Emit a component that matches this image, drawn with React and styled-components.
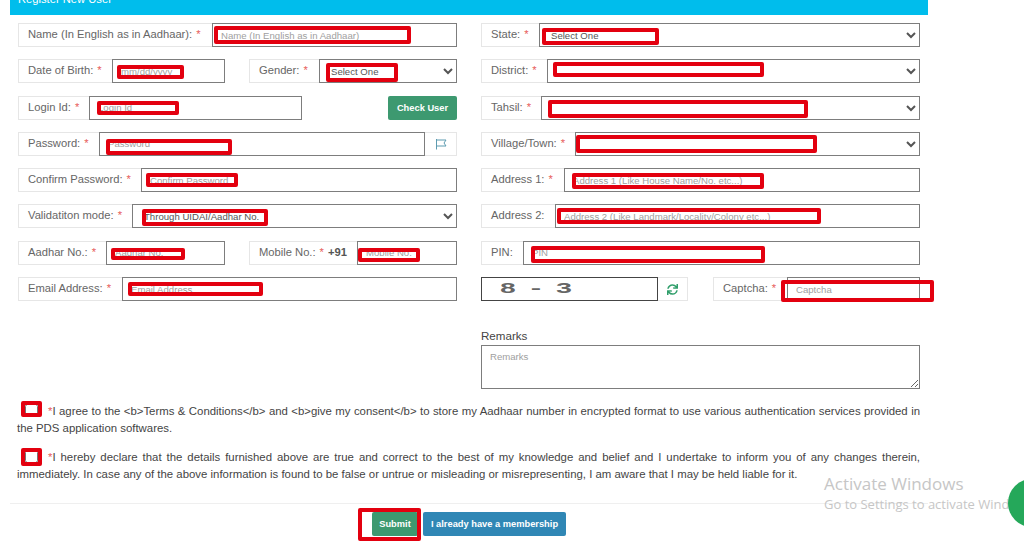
import React from 'react';
import styled, { createGlobalStyle } from 'styled-components';
import { FaSync } from 'react-icons/fa';

const GlobalStyle = createGlobalStyle`
	html, body {
		margin: 0;
		background: #fff;
	}
	body {
		font-family: 'Liberation Sans', Arial, sans-serif;
		font-size: 11.2px;
		color: #555;
	}
`;

const Page = styled.div`
	position: relative;
	width: 1024px;
	height: 543px;
	overflow: hidden;
`;

const Banner = styled.div`
	box-sizing: border-box;
	width: 918px;
	height: 15px;
	margin-left: 10px;
	padding-left: 8px;
	background: #00bdec;
	color: #fff;
	overflow: hidden;
`;

// the title is scrolled off the top of the window, only its lower part shows
const BannerTitle = styled.div`
	margin-top: -1px;
	font-size: 11.2px;
	line-height: 0;
`;

const FormGrid = styled.div`
	display: grid;
	grid-template-columns: 439px 439px;
	column-gap: 24px;
	padding: 8px 0 0 18px;
`;

const Column = styled.div`
	display: flex;
	flex-direction: column;
	gap: 12.3px;
`;

const Row = styled.div`
	display: flex;
	height: 24px;
	justify-content: space-between;
`;

const Group = styled.div`
	display: flex;
	height: 24px;
	width: ${props => (props.$width ? `${props.$width}px` : '100%')};
`;

const Addon = styled.label`
	box-sizing: border-box;
	display: flex;
	align-items: center;
	flex: none;
	width: ${props => props.$width}px;
	padding: 0 0 2px 9px;
	border: 1px solid #e6e6e6;
	border-right: none;
	white-space: nowrap;
	color: #666;
`;

const Star = styled.span`
	color: #e8605c;
	margin-left: 4px;
`;

const ClauseStar = styled.span`
	color: #e8605c;
`;

const Prefix = styled.b`
	color: #555;
	margin-left: 4px;
`;

const TextInput = styled.input`
	box-sizing: border-box;
	flex: 1;
	min-width: 0;
	height: 24px;
	padding: 0 8px;
	border: 1px solid #7d7d7d;
	border-radius: 0;
	outline: none;
	background: #fff;
	font-family: inherit;
	font-size: 9.6px;
	color: #555;
	&::placeholder {
		color: #a0a0a0;
		opacity: 1;
	}
`;

const Select = styled.select`
	box-sizing: border-box;
	flex: 1;
	min-width: 0;
	height: 24px;
	padding: 0 7px;
	border: 1px solid #7d7d7d;
	border-radius: 0;
	outline: none;
	background: #fff;
	font-family: inherit;
	font-size: 9.6px;
	color: #555;
`;

const FlagAddon = styled.span`
	box-sizing: border-box;
	display: flex;
	align-items: center;
	justify-content: center;
	flex: none;
	width: 32px;
	border: 1px solid #e6e6e6;
	border-left: none;
	color: #5d9bb0;
`;

const Button = styled.button`
	height: 24px;
	padding: 0;
	width: ${props => props.$width}px;
	border: none;
	border-radius: 2px;
	background: ${props => (props.$blue ? '#3087b5' : '#3d9970')};
	color: #fff;
	font-family: inherit;
	font-size: 9.3px;
	font-weight: bold;
`;

const CaptchaBox = styled.div`
	box-sizing: border-box;
	display: flex;
	align-items: center;
	justify-content: center;
	width: 177px;
	padding-right: 70px;
	border: 1px solid #444;
	font-family: 'Liberation Mono', monospace;
	font-weight: bold;
	font-size: 14px;
	color: #666;
	white-space: pre;
	letter-spacing: -1.4px;
`;

const CaptchaText = styled.span`
	display: inline-block;
	transform: scaleX(2);
`;

const RefreshAddon = styled.span`
	box-sizing: border-box;
	display: flex;
	align-items: center;
	justify-content: center;
	width: 30px;
	border: 1px solid #e6e6e6;
	border-left: none;
	color: #2f9e6a;
	font-size: 11px;
`;

const CaptchaLeft = styled.div`
	display: flex;
`;

const RemarksLabel = styled.div`
	margin-top: 28px;
	margin-bottom: 2px;
	color: #444;
	font-size: 11.6px;
	line-height: 14px;
`;

const RemarksArea = styled.textarea`
	box-sizing: border-box;
	display: block;
	width: 439px;
	height: 44px;
	padding: 5px 8px;
	border: 1px solid #7d7d7d;
	border-radius: 0;
	outline: none;
	font-family: inherit;
	font-size: 9.6px;
	&::placeholder {
		color: #a0a0a0;
		opacity: 1;
	}
`;

const Terms = styled.div`
	width: 903px;
	margin: 14px 0 0 17px;
	display: flex;
	flex-direction: column;
	gap: 13px;
`;

const Clause = styled.p`
	margin: 0;
	font-size: 11.4px;
	line-height: 16.5px;
	color: #444;
	text-align: justify;
`;

const Check = styled.input`
	width: 13px;
	height: 13px;
	margin: 0 10px 0 8px;
	vertical-align: -2px;
`;

const Divider = styled.hr`
	width: 918px;
	height: 1px;
	margin: 21px 0 0 10px;
	border: none;
	background: #efefef;
`;

const Actions = styled.div`
	display: flex;
	gap: 5px;
	padding: 8px 0 0 372px;
`;

// red marker boxes drawn on top of the form
const Mark = styled.div`
	position: absolute;
	box-sizing: border-box;
	left: ${props => props.$x}px;
	top: ${props => props.$y}px;
	width: ${props => props.$w}px;
	height: ${props => props.$h}px;
	border: 4px solid #e3000f;
	border-radius: 2px;
`;

const Watermark = styled.div`
	position: absolute;
	left: 824px;
	top: 473px;
	font-family: 'Open Sans', sans-serif;
	color: #c6c6c6;
	white-space: nowrap;
`;

const WatermarkTitle = styled.div`
	font-size: 17px;
	line-height: 22px;
`;

const WatermarkSub = styled.div`
	font-size: 13px;
	line-height: 18px;
`;

const ChatBubble = styled.div`
	position: absolute;
	left: 1008px;
	top: 479px;
	width: 48px;
	height: 48px;
	border-radius: 50%;
	background: #25a85a;
`;

const marks = [
	[214, 26, 197, 18],
	[117, 65, 67, 14],
	[326, 63, 72, 19],
	[97, 101, 82, 14],
	[106, 139, 126, 16],
	[146, 173, 92, 14],
	[142, 209, 126, 17],
	[111, 248, 74, 12],
	[358, 248, 62, 14],
	[128, 282, 135, 14],
	[542, 28, 117, 17],
	[553, 62, 211, 15],
	[548, 100, 260, 18],
	[576, 135, 241, 18],
	[572, 173, 192, 16],
	[557, 208, 264, 16],
	[531, 246, 234, 17],
	[781, 280, 153, 22],
	[21, 401, 21, 16],
	[21, 448, 21, 18],
	[358, 508, 63, 33],
];

const FlagIcon = () => (
	<svg width='12' height='12' viewBox='0 0 12 12' fill='none' stroke='currentColor' strokeWidth='1'>
		<path d='M1.5 1v10.5M1.5 2h9.5l-2 3 2 3H1.5' />
	</svg>
);

const Field = ({ label, width, required = true, prefix, groupWidth, placeholder, options, type = 'text' }) => (
	<Group $width={groupWidth}>
		<Addon $width={width}>
			{label}
			{required && <Star>*</Star>}
			{prefix && <Prefix>{prefix}</Prefix>}
		</Addon>
		{options ? (
			<Select defaultValue={options}>
				<option>{options}</option>
			</Select>
		) : (
			<TextInput type={type} placeholder={placeholder} />
		)}
	</Group>
);

const App = () => (
	<Page>
		<GlobalStyle />
		<Banner>
			<BannerTitle>Register New User</BannerTitle>
		</Banner>
		<FormGrid>
			<Column>
				<Field label='Name (In English as in Aadhaar):' width={194} placeholder='Name (In English as in Aadhaar)' />
				<Row>
					<Field label='Date of Birth:' width={94} groupWidth={207} placeholder='mm/dd/yyyy' />
					<Field label='Gender:' width={70} groupWidth={208} options='Select One' />
				</Row>
				<Row>
					<Field label='Login Id:' width={71} groupWidth={284} placeholder='Login Id' />
					<Button $width={69}>Check User</Button>
				</Row>
				<Group>
					<Addon $width={81}>
						Password:<Star>*</Star>
					</Addon>
					<TextInput type='password' placeholder='Password' />
					<FlagAddon>
						<FlagIcon />
					</FlagAddon>
				</Group>
				<Field label='Confirm Password:' width={123} type='password' placeholder='Confirm Password' />
				<Field label='Validatiton mode:' width={114} options='Through UIDAI/Aadhar No.' />
				<Row>
					<Field label='Aadhar No.:' width={88} groupWidth={207} placeholder='Aadhar No.' />
					<Field label='Mobile No.:' prefix='+91' width={108} groupWidth={208} placeholder='Mobile No.' />
				</Row>
				<Field label='Email Address:' width={104} placeholder='Email Address' />
			</Column>
			<Column>
				<Field label='State:' width={58} options='Select One' />
				<Field label='District:' width={66} options=' ' />
				<Field label='Tahsil:' width={60} options=' ' />
				<Field label='Village/Town:' width={94} options=' ' />
				<Field label='Address 1:' width={83} placeholder='Address 1 (Like House Name/No. etc...)' />
				<Field label='Address 2:' required={false} width={74} placeholder='Address 2 (Like Landmark/Locality/Colony etc...)' />
				<Field label='PIN:' required={false} width={42} placeholder='PIN' />
				<div>
					<Row>
						<CaptchaLeft>
							<CaptchaBox>
								<CaptchaText>8 - 3</CaptchaText>
							</CaptchaBox>
							<RefreshAddon>
								<FaSync />
							</RefreshAddon>
						</CaptchaLeft>
						<Field label='Captcha:' width={74} groupWidth={207} placeholder='Captcha' />
					</Row>
					<RemarksLabel>Remarks</RemarksLabel>
					<RemarksArea placeholder='Remarks' />
				</div>
			</Column>
		</FormGrid>
		<Terms>
			<Clause>
				<Check type='checkbox' />
				<ClauseStar>*</ClauseStar>I agree to the &lt;b&gt;Terms &amp; Conditions&lt;/b&gt; and &lt;b&gt;give my consent&lt;/b&gt; to
				store my Aadhaar number in encrypted format to use various authentication services provided in the PDS
				application softwares.
			</Clause>
			<Clause>
				<Check type='checkbox' />
				<ClauseStar>*</ClauseStar>I hereby declare that the details furnished above are true and correct to the best of my
				knowledge and belief and I undertake to inform you of any changes therein, immediately. In case any of the above
				information is found to be false or untrue or misleading or misrepresenting, I am aware that I may be held liable
				for it.
			</Clause>
		</Terms>
		<Divider />
		<Actions>
			<Button $width={46}>Submit</Button>
			<Button $blue $width={143}>I already have a membership</Button>
		</Actions>
		{marks.map(([x, y, w, h]) => (
			<Mark key={`${x}-${y}`} $x={x} $y={y} $w={w} $h={h} />
		))}
		<Watermark>
			<WatermarkTitle>Activate Windows</WatermarkTitle>
			<WatermarkSub>Go to Settings to activate Windows.</WatermarkSub>
		</Watermark>
		<ChatBubble />
	</Page>
);

export default App;
